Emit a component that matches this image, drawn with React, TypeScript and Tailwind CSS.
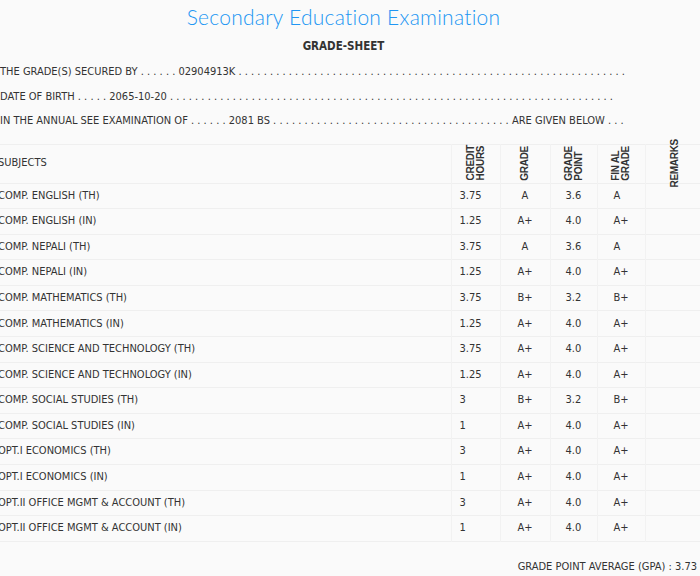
import React from "react";

interface SubjectRow {
  name: string;
  credit: string;
  grade: string;
  point: string;
  finalGrade: string;
}

const rows: SubjectRow[] = [
  { name: "COMP. ENGLISH (TH)", credit: "3.75", grade: "A", point: "3.6", finalGrade: "A" },
  { name: "COMP. ENGLISH (IN)", credit: "1.25", grade: "A+", point: "4.0", finalGrade: "A+" },
  { name: "COMP. NEPALI (TH)", credit: "3.75", grade: "A", point: "3.6", finalGrade: "A" },
  { name: "COMP. NEPALI (IN)", credit: "1.25", grade: "A+", point: "4.0", finalGrade: "A+" },
  { name: "COMP. MATHEMATICS (TH)", credit: "3.75", grade: "B+", point: "3.2", finalGrade: "B+" },
  { name: "COMP. MATHEMATICS (IN)", credit: "1.25", grade: "A+", point: "4.0", finalGrade: "A+" },
  { name: "COMP. SCIENCE AND TECHNOLOGY (TH)", credit: "3.75", grade: "A+", point: "4.0", finalGrade: "A+" },
  { name: "COMP. SCIENCE AND TECHNOLOGY (IN)", credit: "1.25", grade: "A+", point: "4.0", finalGrade: "A+" },
  { name: "COMP. SOCIAL STUDIES (TH)", credit: "3", grade: "B+", point: "3.2", finalGrade: "B+" },
  { name: "COMP. SOCIAL STUDIES (IN)", credit: "1", grade: "A+", point: "4.0", finalGrade: "A+" },
  { name: "OPT.I ECONOMICS (TH)", credit: "3", grade: "A+", point: "4.0", finalGrade: "A+" },
  { name: "OPT.I ECONOMICS (IN)", credit: "1", grade: "A+", point: "4.0", finalGrade: "A+" },
  { name: "OPT.II OFFICE MGMT & ACCOUNT (TH)", credit: "3", grade: "A+", point: "4.0", finalGrade: "A+" },
  { name: "OPT.II OFFICE MGMT & ACCOUNT (IN)", credit: "1", grade: "A+", point: "4.0", finalGrade: "A+" },
];

function dots(n: number) {
  return Array(n).fill(".").join(" ");
}

function InfoLine({ label, value, before, after, tail }: { label: string; value: string; before: number; after: number; tail?: string }) {
  return (
    <p className="h-[24.5px] leading-[24.5px] whitespace-nowrap">
      {label} {dots(before)} {value} {dots(after)}
      {tail ? ` ${tail}` : ""}
    </p>
  );
}

function HeadCell({ lines }: { lines: string[] }) {
  return (
    <th className="border-x border-[#f2f2f2] p-0 align-bottom">
      <div className="flex justify-center pb-[2px]">
        <span className="[writing-mode:vertical-rl] rotate-180 text-left font-['Liberation_Sans',sans-serif] text-[10px] font-bold leading-[10px] tracking-[-0.3px] text-[#333]">
          {lines.map((l, i) => (
            <React.Fragment key={i}>
              {i > 0 && <br />}
              {l}
            </React.Fragment>
          ))}
        </span>
      </div>
    </th>
  );
}

export default function App() {
  return (
    <div className="h-[576px] w-[700px] overflow-hidden bg-[#fafafa] font-['DejaVu_Sans_Condensed','DejaVu_Sans',sans-serif] text-[11px] text-[#333]">
      <h1 className="pt-[4px] pr-[13px] text-center font-['Lato',sans-serif] text-[21px] font-light leading-[26px] tracking-[0.25px] text-[#2196f3]">
        Secondary Education Examination
      </h1>
      <h2 className="mt-[9px] pr-[13px] text-center text-[11.5px] font-bold leading-[14px] text-[#333]">GRADE-SHEET</h2>

      <div className="mt-[7px]">
        <InfoLine label="THE GRADE(S) SECURED BY" value="02904913K" before={6} after={62} />
        <InfoLine label="DATE OF BIRTH" value="2065-10-20" before={5} after={71} />
        <InfoLine label="IN THE ANNUAL SEE EXAMINATION OF" value="2081 BS" before={6} after={38} tail="ARE GIVEN BELOW . . ." />
      </div>

      <table className="-ml-[3px] mt-[10px] w-[760px] table-fixed border-collapse">
        <colgroup>
          <col className="w-[454px]" />
          <col className="w-[49px]" />
          <col className="w-[50px]" />
          <col className="w-[47px]" />
          <col className="w-[48px]" />
          <col className="w-[112px]" />
        </colgroup>
        <thead>
          <tr className="h-[39px] border-y border-[#efefef]">
            <th className="border-r border-[#f2f2f2] p-0 text-left align-middle font-normal">
              <span className="pl-[1px]">SUBJECTS</span>
            </th>
            <HeadCell lines={["CREDIT", "HOURS"]} />
            <HeadCell lines={["GRADE"]} />
            <HeadCell lines={["GRADE", "POINT"]} />
            <HeadCell lines={["FIN AL", "GRADE"]} />
            <th className="relative border-x border-[#f2f2f2] p-0">
              <div className="absolute left-[24px] top-[-5px] flex h-[48px] items-center">
                <span className="[writing-mode:vertical-rl] rotate-180 font-['Liberation_Sans',sans-serif] text-[10px] font-bold leading-[10px] tracking-[-0.3px] text-[#333]">
                  REMARKS
                </span>
              </div>
            </th>
          </tr>
        </thead>
        <tbody>
          {rows.map((r) => (
            <tr key={r.name} className="h-[25.6px] border-b border-[#efefef]">
              <td className="border-r border-[#f2f2f2] p-0 pl-[1px] whitespace-nowrap">{r.name}</td>
              <td className="border-x border-[#f2f2f2] p-0 pl-[8px]">{r.credit}</td>
              <td className="border-x border-[#f2f2f2] p-0 text-center">{r.grade}</td>
              <td className="border-x border-[#f2f2f2] p-0 pl-[15px]">{r.point}</td>
              <td className="border-x border-[#f2f2f2] p-0 pl-[16px]">{r.finalGrade}</td>
              <td className="border-x border-[#f2f2f2] p-0"></td>
            </tr>
          ))}
        </tbody>
      </table>

      <p className="mt-[17px] pr-[3px] text-right">GRADE POINT AVERAGE (GPA) : 3.73</p>
    </div>
  );
}
